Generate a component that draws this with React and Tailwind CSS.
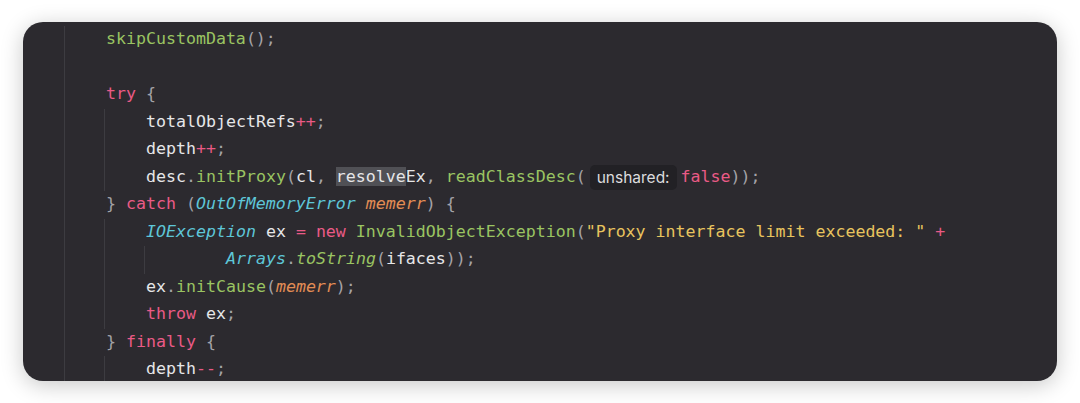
import React from 'react';

const P = 'text-[#a4a3a8]'; // punctuation
const I = 'text-[#e6e6e8]'; // identifiers
const K = 'text-[#ea5a86]'; // keywords / operators
const M = 'text-[#9ac462]'; // method calls
const T = 'text-[#5ec6d8] italic'; // types
const V = 'text-[#e38d55] italic'; // params
const S = 'text-[#e8c45e]'; // strings

const lines = [
  { indent: 2, guides: [1], tokens: [['skipCustomData', M], ['();', P]] },
  { indent: 2, guides: [1], tokens: [] },
  { indent: 2, guides: [1], tokens: [['try', K], [' {', P]] },
  { indent: 3, guides: [1, 2], tokens: [['totalObjectRefs', I], ['++', K], [';', P]] },
  { indent: 3, guides: [1, 2], tokens: [['depth', I], ['++', K], [';', P]] },
  {
    indent: 3,
    guides: [1, 2],
    tokens: [
      ['desc', I], ['.', P], ['initProxy', M], ['(', P], ['cl', I], [', ', P],
      ['resolve', I + ' bg-[#505055]'], ['Ex', I], [', ', P], ['readClassDesc', M], ['(', P],
      ['hint', 'unshared:'], ['false', K], ['));', P],
    ],
  },
  {
    indent: 2,
    guides: [1],
    tokens: [['} ', P], ['catch', K], [' (', P], ['OutOfMemoryError', T], [' ', P], ['memerr', V], [') {', P]],
  },
  {
    indent: 3,
    guides: [1, 2],
    tokens: [
      ['IOException', T], [' ex ', I], ['=', K], [' ', I], ['new', K], [' ', I],
      ['InvalidObjectException', M], ['(', P], ['"Proxy interface limit exceeded: "', S], [' ', I], ['+', K],
    ],
  },
  {
    indent: 5,
    guides: [1, 2, 3],
    tokens: [['Arrays', T], ['.', P], ['toString', M + ' italic'], ['(', P], ['ifaces', I], ['));', P]],
  },
  { indent: 3, guides: [1, 2], tokens: [['ex', I], ['.', P], ['initCause', M], ['(', P], ['memerr', V], [');', P]] },
  { indent: 3, guides: [1, 2], tokens: [['throw', K], [' ex', I], [';', P]] },
  { indent: 2, guides: [1], tokens: [['} ', P], ['finally', K], [' {', P]] },
  { indent: 3, guides: [1, 2], tokens: [['depth', I], ['--', K], [';', P]] },
];

const CodeLine = ({ line }) => (
  <div className="flex h-[27.5px] items-center">
    <div className="flex self-stretch">
      {Array.from({ length: line.indent }).map((_, i) => (
        <div
          key={i}
          className={`w-[40px] self-stretch ${line.guides.includes(i) ? 'border-l border-[#3d3c41]' : ''}`}
        />
      ))}
    </div>
    <div className="pl-[2px] whitespace-pre">
      {line.tokens.map(([text, cls], i) =>
        text === 'hint' ? (
          <span
            key={i}
            className="mx-[4px] inline-block rounded-[5px] bg-[#222125] px-[7px] font-['Inter',sans-serif] text-[15.5px] leading-[25px] text-[#dcdcde] align-middle"
          >
            {cls}
          </span>
        ) : (
          <span key={i} className={cls}>
            {text}
          </span>
        )
      )}
    </div>
  </div>
);

export default function App() {
  return (
    <div className="w-[1080px] h-[403px] bg-white pt-[22px] pl-[23px]">
      <div className="w-[1034px] h-[359px] overflow-hidden rounded-[20px] bg-[#2c2a2f] pt-[4px] pl-[1px] shadow-[0_4px_22px_rgba(0,0,0,0.22)] font-['DejaVu_Sans_Mono',monospace] text-[16.6px]">
        {lines.map((line, i) => (
          <CodeLine key={i} line={line} />
        ))}
      </div>
    </div>
  );
}
